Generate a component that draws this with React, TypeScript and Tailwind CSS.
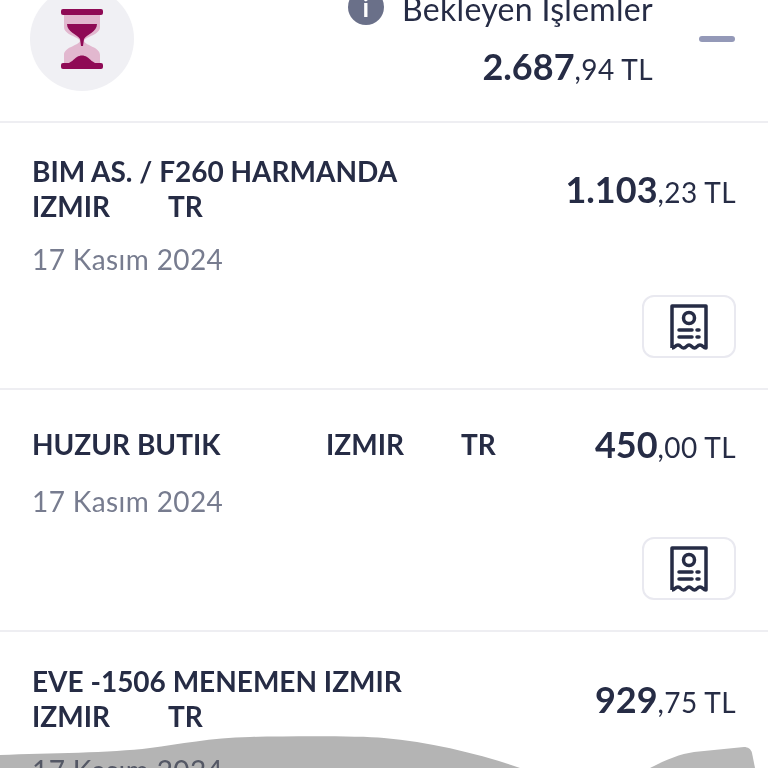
const FONT = "font-['Lato','Noto_Sans',sans-serif]";

type Part = { text: string; width: string };

type Tx = {
  lines: Part[][];
  whole: string;
  cents: string;
  date: string;
  receipt: boolean;
  top: string;
  dateGap: string;
};

const rows: Tx[] = [
  {
    lines: [
      [{ text: 'BIM AS. / F260 HARMANDA', width: 'w-auto' }],
      [
        { text: 'IZMIR', width: 'w-[136px]' },
        { text: 'TR', width: 'w-auto' },
      ],
    ],
    whole: '1.103',
    cents: ',23 TL',
    date: '17 Kasım 2024',
    receipt: true,
    top: 'pt-[31px]',
    dateGap: 'mt-[18px]',
  },
  {
    lines: [
      [
        { text: 'HUZUR BUTIK', width: 'w-[294px]' },
        { text: 'IZMIR', width: 'w-[135px]' },
        { text: 'TR', width: 'w-auto' },
      ],
    ],
    whole: '450',
    cents: ',00 TL',
    date: '17 Kasım 2024',
    receipt: true,
    top: 'pt-[36px]',
    dateGap: 'mt-[22px]',
  },
  {
    lines: [
      [{ text: 'EVE -1506 MENEMEN IZMIR', width: 'w-auto' }],
      [
        { text: 'IZMIR', width: 'w-[136px]' },
        { text: 'TR', width: 'w-auto' },
      ],
    ],
    whole: '929',
    cents: ',75 TL',
    date: '17 Kasım 2024',
    receipt: false,
    top: 'pt-[32px]',
    dateGap: 'mt-[19px]',
  },
];

function Hourglass() {
  return (
    <svg width="42" height="60" viewBox="0 0 42 60" fill="none">
      <path d="M3 6H39V18C39 26 25 27 23 32C25 37 39 38 39 46V54H3V46C3 38 17 37 19 32C17 27 3 26 3 18Z" fill="#e2b8cf" />
      <path d="M6 15H36C36 23 26 25 23 30L22 37H20L19 30C16 25 6 23 6 15Z" fill="#8f0a55" />
      <path d="M5 55C10 54 13 50 16 48C19 46 23 46 26 48C29 50 32 54 37 55Z" fill="#8f0a55" />
      <rect x="0" y="0" width="42" height="6" rx="2" fill="#8f0a55" />
      <rect x="0" y="54" width="42" height="6" rx="2" fill="#8f0a55" />
    </svg>
  );
}

function ReceiptIcon() {
  return (
    <svg width="38" height="46" viewBox="0 0 38 46" fill="none" stroke="#262c45" strokeWidth="3.5">
      <path d="M2 44V2H36V44C33 44 33 41 30 41S27 44 24.500 44 21.500 41 19 41 16.500 44 13.500 44 11 41 8 41 5 44 2 44" strokeLinejoin="round" />
      <circle cx="19" cy="14" r="5.500" />
      <path d="M9 26H22M27 26H29M9 33H22M27 33H29" strokeLinecap="round" />
    </svg>
  );
}

function Amount({ whole, cents }: { whole: string; cents: string }) {
  return (
    <div className="flex items-baseline h-9 text-[#262c45] whitespace-nowrap leading-none">
      <span className="text-[36px] font-bold">{whole}</span>
      <span className="text-[28px] tracking-[0.4px]">{cents}</span>
    </div>
  );
}

function Row({ tx }: { tx: Tx }) {
  return (
    <div className={`border-b-2 border-[#eeeef2] px-8 pb-[30px] last:border-b-0 ${tx.top}`}>
      <div className="flex justify-between items-center">
        <div className="text-[28px] leading-[35px] font-bold text-[#262c45]">
          {tx.lines.map((line, i) => (
            <div key={i} className="flex">
              {line.map((part) => (
                <span key={part.text} className={part.width}>{part.text}</span>
              ))}
            </div>
          ))}
        </div>
        <Amount whole={tx.whole} cents={tx.cents} />
      </div>
      <div className={`text-[28px] leading-[35px] tracking-[0.4px] text-[#777c8f] ${tx.dateGap}`}>{tx.date}</div>
      {tx.receipt && (
        <div className="flex justify-end mt-[18px]">
          <div className="w-[94px] h-[63px] rounded-xl border-2 border-[#e9e9f0] flex items-center justify-center">
            <ReceiptIcon />
          </div>
        </div>
      )}
    </div>
  );
}

export default function App() {
  return (
    <div className={`${FONT} relative w-[768px] h-[768px] overflow-hidden bg-white`}>
      <div className="h-[137px] border-b-2 border-[#eeeef2] -mt-[14px] flex justify-between pl-[30px]">
        <div className="w-[104px] h-[104px] mt-[1px] rounded-full bg-[#f0f0f4] flex items-center justify-center">
          <Hourglass />
        </div>
        <div className="flex">
          <div className="flex flex-col items-end pt-[3px] pr-[46px]">
            <div className="flex items-center gap-[18px] text-[32px] leading-[40px] tracking-[0.3px] text-[#262c45]">
              <span className="w-9 h-9 rounded-full bg-[#6a7089] text-white text-[26px] font-bold flex items-center justify-center -mt-[5px]">i</span>
              Bekleyen İşlemler
            </div>
            <div className="mt-[19px]">
              <Amount whole="2.687" cents=",94 TL" />
            </div>
          </div>
          <div className="w-9 h-[6px] rounded-full bg-[#9499b8] mt-[50px] mr-[33px]" />
        </div>
      </div>
      {rows.map((tx) => (
        <Row key={tx.whole} tx={tx} />
      ))}
      <svg className="absolute left-0 bottom-0 mix-blend-multiply blur-[0.7px]" width="768" height="40" viewBox="0 0 768 40">
        <path d="M0 27C50 25 110 25 150 20C180 16 210 10 250 9C300 8 360 8 384 10C430 14 480 26 520 40H0Z" fill="#b4b4b4" />
        <path d="M650 40C665 32 680 26 694 24L744 19C748 19 751 21 752 25L755 40Z" fill="#b8b8b8" />
      </svg>
    </div>
  );
}
